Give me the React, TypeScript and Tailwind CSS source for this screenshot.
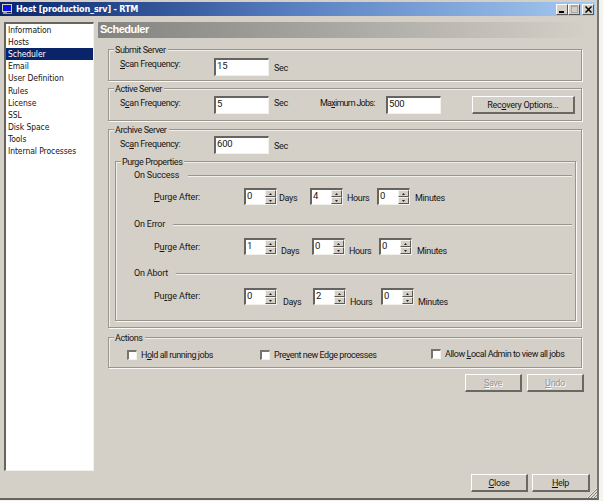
import type { ReactNode } from 'react';

function Group({ title, className, children }: { title: string; className: string; children: ReactNode }) {
  return (
    <section className={`relative border border-[#98958e] shadow-[1px_1px_0_#faf9f5,inset_1px_1px_0_#f0eee8] ${className}`}>
      <h2 className="absolute -top-[5px] left-[5px] h-[11px] bg-[#d4d0c8] px-[1px] pr-[2px] leading-[11px] tracking-[-0.42px]">{title}</h2>
      {children}
    </section>
  );
}

function TextBox({ value, className = '' }: { value: string; className?: string }) {
  return (
    <div className={`h-[18px] w-[55px] shrink-0 border-t-2 border-l-2 border-r border-b border-t-[#66645f] border-l-[#66645f] border-r-[#f3f1ec] border-b-[#f3f1ec] bg-white pl-[1px] text-[9.5px] leading-[12px] tracking-[-0.2px] ${className}`}>
      {value}
    </div>
  );
}

function Spinner({ value, className = '' }: { value: string; className?: string }) {
  const button =
    'flex h-[7px] w-[11px] items-center justify-center border border-t-[#f5f3ee] border-l-[#f5f3ee] border-r-[#5a5853] border-b-[#5a5853] bg-[#d4d0c8]';
  return (
    <div className={`flex h-[17px] w-[33px] shrink-0 justify-between border-t-2 border-l-2 border-r border-b border-t-[#66645f] border-l-[#66645f] border-r-[#f3f1ec] border-b-[#f3f1ec] bg-white ${className}`}>
      <span className="pl-[1px] text-[9.5px] leading-[12px]">{value}</span>
      <div className="flex w-[11px] flex-col">
        <div className={button}>
          <svg width="3" height="2" viewBox="0 0 3 2"><path d="M0 2 1.5 0 3 2Z" fill="#222" /></svg>
        </div>
        <div className={button}>
          <svg width="3" height="2" viewBox="0 0 3 2"><path d="M0 0H3L1.5 2Z" fill="#222" /></svg>
        </div>
      </div>
    </div>
  );
}

function Check({ children, className = '' }: { children: ReactNode; className?: string }) {
  return (
    <div className={`flex h-[10px] shrink-0 items-center ${className}`}>
      <div className="h-[10px] w-[10px] shrink-0 border-t-2 border-l-2 border-r border-b border-t-[#77746e] border-l-[#77746e] border-r-[#f3f1ec] border-b-[#f3f1ec] bg-white" />
      <span className="ml-[4px] tracking-[-0.48px]">{children}</span>
    </div>
  );
}

function Button({ children, className = '' }: { children: ReactNode; className?: string }) {
  return (
    <div className={`flex h-[18px] shrink-0 items-center justify-center border-t border-l border-r-2 border-b-2 border-t-white border-l-white border-r-[#6a6862] border-b-[#6a6862] ${className}`}>
      <span className="tracking-[-0.3px]">{children}</span>
    </div>
  );
}

function K({ children }: { children: string }) {
  return <span className="underline decoration-1 underline-offset-[1px]">{children}</span>;
}

function Section({ title, className }: { title: string; className: string }) {
  return (
    <div className={`flex h-[12px] items-center ${className}`}>
      <h3 className="shrink-0 tracking-[-0.2px]">{title}</h3>
      <div className="mt-[2px] h-[2px] flex-1 border-t border-t-[#98958e] bg-[#f3f1ec]" />
    </div>
  );
}

const sections = ['Information', 'Hosts', 'Scheduler', 'Email', 'User Definition', 'Rules', 'License', 'SSL', 'Disk Space', 'Tools', 'Internal Processes'];

export default function App() {
  return (
    <div className="flex h-[501px] w-[603px] overflow-hidden bg-[#f4f3f0] font-['Roboto',sans-serif] text-[9px] leading-[12px] tracking-[-0.36px] whitespace-nowrap text-[#151515]">
      <div className="flex h-[500px] w-[599px] flex-col border-r-2 border-b-2 border-r-[#77756f] border-b-[#66645f] bg-[#d4d0c8]">
        <header className="mt-[2px] flex h-[14px] w-[595px] shrink-0 items-center bg-linear-to-r from-[#0b256b] via-[#5a80c2] to-[#a6caf0]">
          <svg className="ml-[2px]" width="11" height="11" viewBox="0 0 11 11">
            <rect x="0" y="0" width="10" height="8" fill="#d4d0c8" />
            <rect x="1" y="1" width="8" height="6" fill="#0b12e8" />
            <rect x="1" y="8" width="9" height="2" fill="#9b9994" />
            <rect x="5" y="8" width="4" height="1" fill="#222" />
          </svg>
          <h1 className="ml-[3px] font-['DejaVu_Sans_Condensed','DejaVu_Sans',sans-serif] text-[9px] font-bold tracking-[-0.2px] text-white">Host [production_srv] - RTM</h1>
          <div className="ml-auto flex h-[11px] pr-[1px] text-black">
            <div className="flex w-[12px] items-end border border-t-white border-l-white border-r-[#555] border-b-[#555] bg-[#d4d0c8] pb-[1px] pl-[2px]"><i className="h-[2px] w-[5px] bg-black" /></div>
            <div className="flex w-[12px] items-center justify-center border border-t-white border-l-white border-r-[#555] border-b-[#555] bg-[#d4d0c8]"><i className="h-[8px] w-[7px] border border-t-2 border-[#aaa79f]" /></div>
            <div className="ml-[2px] flex w-[12px] items-center justify-center border border-t-white border-l-white border-r-[#555] border-b-[#555] bg-[#d4d0c8]">
              <svg width="7" height="7" viewBox="0 0 7 7"><path d="m.5.5 6 6m0-6-6 6" stroke="#000" strokeWidth="1.5" /></svg>
            </div>
          </div>
        </header>
        <div className="flex flex-1">
          <nav className="mt-[6px] ml-[4px] h-[449px] w-[90px] border-t-2 border-l-2 border-r border-b border-t-[#66645f] border-l-[#66645f] border-r-[#f3f1ec] border-b-[#f3f1ec] bg-white font-['DejaVu_Sans_Condensed','DejaVu_Sans',sans-serif] text-[8.5px] tracking-[-0.08px]">
            {sections.map((s) => (
              <div key={s} className={`h-[12.12px] pl-[2px] leading-[12px] ${s === 'Scheduler' ? 'bg-[#0a246a] text-white' : ''}`}>{s}</div>
            ))}
          </nav>
          <main className="ml-[4px] flex w-[492px] flex-col pt-[6px]">
            <h2 className="h-[16px] bg-linear-to-r from-[#838380] to-[#d4d0c8] pl-[2px] font-['Liberation_Sans',sans-serif] text-[11px] leading-[15px] font-bold tracking-[-0.5px] text-white">Scheduler</h2>
            <Group title="Submit Server" className="mt-[11px] ml-[10px] h-[32px] w-[474px]">
              <div className="flex pt-[8px] pl-[11px]">
                <span className="w-[94px]"><K>S</K>can Frequency:</span>
                <TextBox value="15" />
                <span className="mt-[4px] ml-[5px]">Sec</span>
              </div>
            </Group>
            <Group title="Active Server" className="mt-[7px] ml-[10px] h-[33px] w-[474px]">
              <div className="flex pt-[7px] pl-[11px]">
                <span className="mt-[1px] w-[94px]">S<K>c</K>an Frequency:</span>
                <TextBox value="5" />
                <span className="mt-[1px] ml-[5px] w-[46px]">Sec</span>
                <span className="mt-[1px] w-[66px] tracking-[-0.75px]">Ma<K>x</K>imum Jobs:</span>
                <TextBox value="500" />
                <Button className="ml-[31px] w-[103px]">Rec<K>o</K>very Options...</Button>
              </div>
            </Group>
            <Group title="Archive Server" className="mt-[8px] ml-[10px] h-[199px] w-[474px]">
              <div className="flex pt-[6px] pl-[11px]">
                <span className="mt-[2px] w-[94px]">Sc<K>a</K>n Frequency:</span>
                <TextBox value="600" />
                <span className="mt-[4px] ml-[5px]">Sec</span>
              </div>
              <Group title="Purge Properties" className="mt-[7px] ml-[6px] h-[160px] w-[461px]">
                <Section title="On Success" className="mt-[7px] ml-[18px] w-[438px] gap-[9px]" />
                <div className="mt-[7px] flex h-[18px] pl-[38px]">
                  <span className="mt-[3px] w-[90px] tracking-[-0.12px]"><K>P</K>urge After:</span>
                  <Spinner value="0" />
                  <span className="mt-[4px] w-[33px] pl-[2px]">Days</span>
                  <Spinner value="4" />
                  <span className="mt-[4px] w-[34px] pl-[4px]">Hours</span>
                  <Spinner value="0" />
                  <span className="mt-[4px] pl-[5px]">Minutes</span>
                </div>
                <Section title="On Error" className="mt-[12px] ml-[18px] w-[438px] gap-[8px]" />
                <div className="mt-[8px] flex h-[18px] pl-[38px]">
                  <span className="mt-[3px] w-[90px] tracking-[-0.12px]">P<K>u</K>rge After:</span>
                  <Spinner value="1" />
                  <span className="mt-[7px] w-[35px] pl-[4px]">Days</span>
                  <Spinner value="0" />
                  <span className="mt-[7px] w-[34px] pl-[4px]">Hours</span>
                  <Spinner value="0" />
                  <span className="mt-[7px] pl-[5px]">Minutes</span>
                </div>
                <Section title="On Abort" className="mt-[11px] ml-[18px] w-[438px] gap-[8px]" />
                <div className="mt-[9px] flex h-[18px] pl-[38px]">
                  <span className="mt-[2px] w-[90px] tracking-[-0.12px]">Pu<K>r</K>ge After:</span>
                  <Spinner value="0" />
                  <span className="mt-[8px] w-[36px] pl-[6px]">Days</span>
                  <Spinner value="2" />
                  <span className="mt-[8px] w-[35px] pl-[4px]">Hours</span>
                  <Spinner value="0" />
                  <span className="mt-[8px] pl-[4px]">Minutes</span>
                </div>
              </Group>
            </Group>
            <Group title="Actions" className="mt-[9px] ml-[10px] h-[31px] w-[474px]">
              <div className="flex pl-[18px]">
                <Check className="mt-[12px] w-[133px]">H<K>o</K>ld all running jobs</Check>
                <Check className="mt-[12px] w-[171px]">Pre<K>v</K>ent new Edge processes</Check>
                <Check className="mt-[11px]">Allow <K>L</K>ocal Admin to view all jobs</Check>
              </div>
            </Group>
            <div className="mt-[6px] ml-[367px] flex gap-[5px] text-[#98958e] [text-shadow:1px_1px_0_#fff]">
              <Button className="w-[57px]"><K>S</K>ave</Button>
              <Button className="w-[57px]"><K>U</K>ndo</Button>
            </div>
            <div className="mt-auto flex pb-[6px] pl-[373px]">
              <Button className="w-[57px]"><K>C</K>lose</Button>
              <Button className="ml-[4px] w-[58px]"><K>H</K>elp</Button>
            </div>
          </main>
          <svg className="-ml-[3px] self-end" width="10" height="10" viewBox="0 0 10 10">
            <path d="M1 10 10 1M4 10l6-6M7 10l3-3" stroke="#85827b" />
            <path d="M0 10 10 0M3 10l7-7M6 10l4-4" stroke="#fff" strokeWidth=".5" />
          </svg>
        </div>
      </div>
    </div>
  );
}
